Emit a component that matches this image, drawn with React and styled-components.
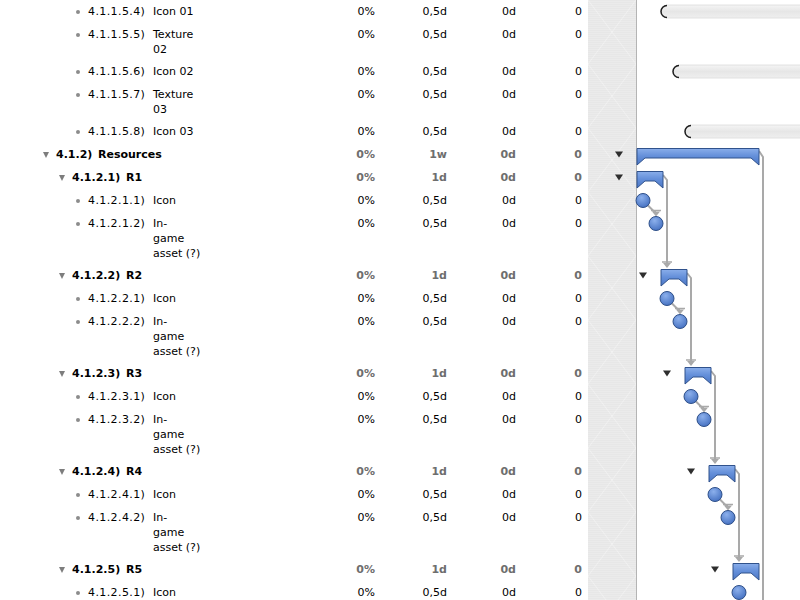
import React from "react";
import styled, { createGlobalStyle } from "styled-components";

const GlobalStyle = createGlobalStyle`
  body {
    margin: 0;
    background: #fff;
    overflow: hidden;
    font-family: "DejaVu Sans", "Liberation Sans", sans-serif;
    font-size: 11px;
    color: #000;
  }
`;

const leaf = (num, name, lines = 1) => ({ level: 5, num, name, lines, pct: "0%", dur: "0,5d" });
const group = (level, num, name, dur) => ({ level, num, name, lines: 1, pct: "0%", dur, group: true });

const rows = [
  leaf("4.1.1.5.4)", "Icon 01"),
  leaf("4.1.1.5.5)", "Texture\n02", 2),
  leaf("4.1.1.5.6)", "Icon 02"),
  leaf("4.1.1.5.7)", "Texture\n03", 2),
  leaf("4.1.1.5.8)", "Icon 03"),
  group(3, "4.1.2)", "Resources", "1w"),
  group(4, "4.1.2.1)", "R1", "1d"),
  leaf("4.1.2.1.1)", "Icon"),
  leaf("4.1.2.1.2)", "In-\ngame\nasset (?)", 3),
  group(4, "4.1.2.2)", "R2", "1d"),
  leaf("4.1.2.2.1)", "Icon"),
  leaf("4.1.2.2.2)", "In-\ngame\nasset (?)", 3),
  group(4, "4.1.2.3)", "R3", "1d"),
  leaf("4.1.2.3.1)", "Icon"),
  leaf("4.1.2.3.2)", "In-\ngame\nasset (?)", 3),
  group(4, "4.1.2.4)", "R4", "1d"),
  leaf("4.1.2.4.1)", "Icon"),
  leaf("4.1.2.4.2)", "In-\ngame\nasset (?)", 3),
  group(4, "4.1.2.5)", "R5", "1d"),
  leaf("4.1.2.5.1)", "Icon"),
];

const HEIGHTS = [0, 23, 37, 52];
const NUM_WIDTH = { 3: 42, 4: 54, 5: 65 };

// top of every row, used by the gantt drawing
const tops = [];
rows.reduce((y, r) => {
  tops.push(y);
  return y + HEIGHTS[r.lines];
}, 0);
const totalHeight = tops[tops.length - 1] + HEIGHTS[rows[rows.length - 1].lines];

const Page = styled.div`
  display: flex;
  width: 800px;
  height: 600px;
  overflow: hidden;
`;

const Outline = styled.div`
  width: 588px;
  flex: none;
`;

const Row = styled.div`
  display: grid;
  grid-template-columns: 330px 45px 72px 69px 66px;
  height: ${(p) => p.$h}px;
  line-height: 15px;
  font-weight: ${(p) => (p.$group ? "bold" : "normal")};
`;

const TitleCell = styled.div`
  display: flex;
  align-items: flex-start;
  padding: 4px 0 0 ${(p) => p.$indent}px;
`;

const Marker = styled.span`
  width: 10px;
  height: 15px;
  margin-right: 5px;
  display: flex;
  align-items: center;
  justify-content: center;
  flex: none;
`;

const Disclosure = styled.span`
  width: 0;
  height: 0;
  border-left: 3.5px solid transparent;
  border-right: 3.5px solid transparent;
  border-top: 6px solid #7d7d7d;
`;

const Bullet = styled.span`
  width: 4px;
  height: 4px;
  border-radius: 50%;
  background: #8c8c8c;
`;

const Num = styled.span`
  width: ${(p) => p.$w}px;
  flex: none;
  white-space: nowrap;
  letter-spacing: ${(p) => (p.$group ? "0" : "0.4px")};
`;

const Name = styled.span`
  white-space: pre-line;
`;

const Value = styled.div`
  padding-top: 4px;
  text-align: right;
  white-space: nowrap;
  color: ${(p) => (p.$group ? "#6e6e6e" : "#000")};
`;

const Chart = styled.div`
  position: relative;
  width: 212px;
  height: ${totalHeight}px;
  flex: none;
`;

const Band = styled.div`
  width: 48px;
  height: 100%;
  border-right: 1px solid #b4b4b4;
  background-color: #e9e9e9;
  background-image:
    linear-gradient(to bottom right, transparent calc(50% - 0.8px), rgba(255, 255, 255, 0.35) 50%, transparent calc(50% + 0.8px)),
    linear-gradient(to top right, transparent calc(50% - 0.8px), rgba(255, 255, 255, 0.35) 50%, transparent calc(50% + 0.8px)),
    repeating-linear-gradient(to bottom, #e7e7e7 0 1px, #ebebeb 1px 2px);
  background-size: 48px 64px, 48px 64px, auto;
`;

const Canvas = styled.svg`
  position: absolute;
  top: 0;
  left: 0;
  overflow: visible;
`;

const LINE = "#a9a9a9";

function ArrowDown({ x, y }) {
  // y = tip of the arrow
  return (
    <g>
      <line x1={x - 5} y1={y - 6} x2={x + 5} y2={y - 6} stroke={LINE} strokeWidth="1.5" />
      <polygon points={`${x - 4},${y - 5} ${x + 4},${y - 5} ${x},${y}`} fill={LINE} />
    </g>
  );
}

function GroupBar({ x, w, top }) {
  const h = 16.5;
  const d = 7;
  const s = 8;
  const pts = [
    [x, top],
    [x + w, top],
    [x + w, top + h],
    [x + w - s, top + h - d],
    [x + s, top + h - d],
    [x, top + h],
  ]
    .map((p) => p.join(","))
    .join(" ");
  return <polygon points={pts} fill="url(#barFill)" stroke="#30528c" strokeWidth="1" />;
}

function Triangle({ x, cy }) {
  return <polygon points={`${x - 4},${cy - 3} ${x + 4},${cy - 3} ${x},${cy + 3}`} fill="#2e2e2e" />;
}

function Pill({ x, cy }) {
  const y = cy - 6.5;
  return (
    <g>
      <rect x={x} y={y} width={200} height={13} rx={6.5} fill="url(#pillFill)" stroke="#dadada" strokeWidth="0.8" />
      <path d={`M ${x + 6} ${y + 0.5} A 6 6 0 0 0 ${x + 6} ${y + 12.5}`} fill="none" stroke="#1e1e1e" strokeWidth="1.5" />
    </g>
  );
}

function Dot({ x, cy }) {
  return <circle cx={x} cy={cy} r={7} fill="url(#dotFill)" stroke="#2e4f88" strokeWidth="1" />;
}

function Gantt() {
  const mid = (i) => tops[i] + 11.5;
  const groupIdx = [6, 9, 12, 15, 18];
  return (
    <Canvas width={212} height={totalHeight} viewBox={`588 0 212 ${totalHeight}`}>
      <defs>
        <linearGradient id="barFill" x1="0" y1="0" x2="0" y2="1">
          <stop offset="0" stopColor="#8aaeea" />
          <stop offset="0.45" stopColor="#6590da" />
          <stop offset="1" stopColor="#4b76c4" />
        </linearGradient>
        <radialGradient id="dotFill" cx="0.4" cy="0.3" r="0.75">
          <stop offset="0" stopColor="#8cb0ec" />
          <stop offset="1" stopColor="#436fc0" />
        </radialGradient>
        <linearGradient id="pillFill" x1="0" y1="0" x2="0" y2="1">
          <stop offset="0" stopColor="#f5f5f5" />
          <stop offset="0.5" stopColor="#e6e6e6" />
          <stop offset="1" stopColor="#efefef" />
        </linearGradient>
      </defs>

      <Pill x={661} cy={mid(0)} />
      <Pill x={673} cy={mid(2)} />
      <Pill x={685} cy={mid(4)} />

      {/* Resources summary */}
      <polyline
        points={`759,${tops[5] + 8} 763,${tops[5] + 14} 763,${totalHeight + 10}`}
        fill="none"
        stroke={LINE}
        strokeWidth="2"
      />
      <Triangle x={619} cy={mid(5)} />
      <GroupBar x={637} w={122} top={tops[5] + 5.5} />

      {groupIdx.map((gi, k) => {
        const x = 637 + 24 * k;
        const next = groupIdx[k + 1];
        const iconY = mid(gi + 1);
        const assetY = gi + 2 < rows.length ? mid(gi + 2) : null;
        return (
          <g key={gi}>
            {next && (
              <g>
                <polyline
                  points={`${x + 26},${tops[gi] + 9} ${x + 30},${tops[gi] + 14} ${x + 30},${tops[next] - 1}`}
                  fill="none"
                  stroke={LINE}
                  strokeWidth="2"
                />
                <ArrowDown x={x + 30} y={tops[next] + 4} />
              </g>
            )}
            <Triangle x={x - 18} cy={mid(gi)} />
            <GroupBar x={x} w={26} top={tops[gi] + 5.5} />
            {assetY !== null && (
              <g>
                <polyline
                  points={`${x + 10},${iconY + 4} ${x + 17},${iconY + 11} ${x + 19},${assetY - 12}`}
                  fill="none"
                  stroke={LINE}
                  strokeWidth="2"
                />
                <ArrowDown x={x + 19} y={assetY - 7} />
                <Dot x={x + 19} cy={assetY} />
              </g>
            )}
            <Dot x={x + 6} cy={iconY} />
          </g>
        );
      })}
    </Canvas>
  );
}

export default function App() {
  return (
    <Page>
      <GlobalStyle />
      <Outline>
        {rows.map((r) => (
          <Row key={r.num} $h={HEIGHTS[r.lines]} $group={r.group}>
            <TitleCell $indent={41 + 16 * (r.level - 3)}>
              <Marker>{r.group ? <Disclosure /> : <Bullet />}</Marker>
              <Num $w={NUM_WIDTH[r.level]} $group={r.group}>
                {r.num}
              </Num>
              <Name>{r.name}</Name>
            </TitleCell>
            <Value $group={r.group}>{r.pct}</Value>
            <Value $group={r.group}>{r.dur}</Value>
            <Value $group={r.group}>0d</Value>
            <Value $group={r.group}>0</Value>
          </Row>
        ))}
      </Outline>
      <Chart>
        <Band />
        <Gantt />
      </Chart>
    </Page>
  );
}
